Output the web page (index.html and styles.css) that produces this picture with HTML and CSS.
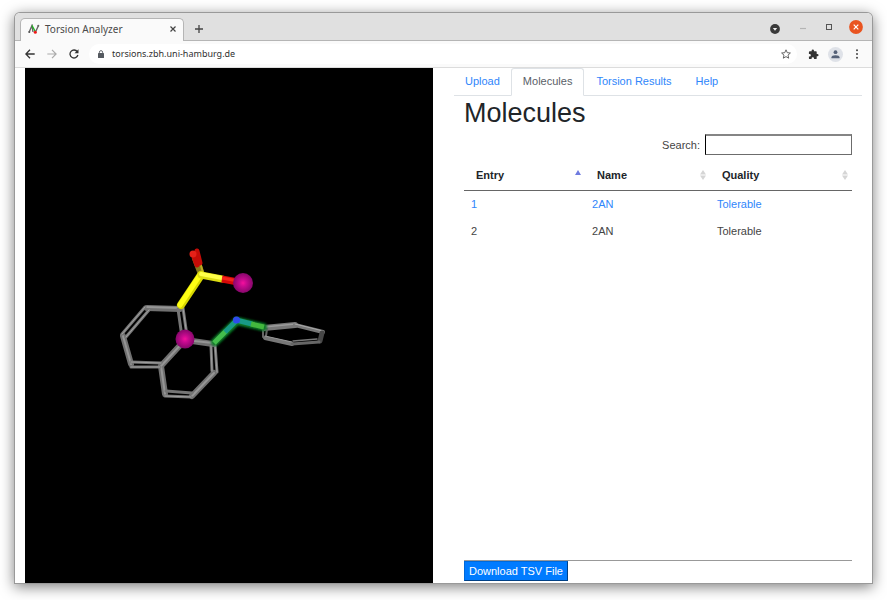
FILE: index.html
```html
<!DOCTYPE html>
<html lang="en">
<head>
<meta charset="utf-8">
<title>Torsion Analyzer</title>
<link rel="stylesheet" href="styles.css">
</head>
<body>
<div class="window">
  <header class="tabstrip">
    <div class="browser-tab">
      <svg class="favicon" width="12" height="10" viewBox="0 0 12 10" fill="none" stroke-width="1.4">
        <path d="M1 8.500 L4 1.500 L5 8" stroke="#666"/><path d="M4 1.500 L7.500 8" stroke="#1fb51f"/><path d="M7.500 8 L10.500 1.500" stroke="#666"/>
        <circle cx="1.300" cy="8" r="1" fill="#555"/><circle cx="10.300" cy="1.800" r="1" fill="#666"/><circle cx="7.300" cy="8.300" r="1.500" fill="#f01818"/>
      </svg>
      <span class="tab-title">Torsion Analyzer</span>
      <button class="icon-btn" aria-label="Close tab"><svg width="8" height="8" viewBox="0 0 8 8" stroke="#444" stroke-width="1.200"><path d="M1.500 1.500 L6.500 6.500 M6.500 1.500 L1.500 6.500"/></svg></button>
    </div>
    <button class="icon-btn new-tab" aria-label="New tab"><svg width="10" height="10" viewBox="0 0 10 10" stroke="#444" stroke-width="1.300"><path d="M5 1 V9 M1 5 H9"/></svg></button>
    <div class="window-controls">
      <button class="icon-btn" aria-label="Tab search"><svg width="10" height="10" viewBox="0 0 10 10"><circle cx="5" cy="5" r="4.900" fill="#3a3a3a"/><path d="M2.800 4 H7.200 L5 6.700 Z" fill="#eee"/></svg></button>
      <button class="icon-btn" aria-label="Minimize"><svg width="6" height="8" viewBox="0 0 6 8"><path d="M0 5.500 H6" stroke="#b4b4b4" stroke-width="1.200"/></svg></button>
      <button class="icon-btn" aria-label="Maximize"><svg width="6" height="6" viewBox="0 0 6 6"><rect x=".5" y=".5" width="5" height="5" fill="none" stroke="#555"/></svg></button>
      <button class="icon-btn" aria-label="Close"><svg width="14" height="14" viewBox="0 0 14 14"><circle cx="7" cy="7" r="6.900" fill="#e95420"/><path d="M4.700 4.700 L9.300 9.300 M9.300 4.700 L4.700 9.300" stroke="#fff" stroke-width="1.200"/></svg></button>
    </div>
  </header>
  <div class="toolbar">
    <div class="nav-buttons">
      <button class="icon-btn" aria-label="Back"><svg width="10" height="10" viewBox="0 0 10 10" fill="none" stroke="#333" stroke-width="1.300"><path d="M9.700 5 H1 M5 .8 L.9 5 L5 9.200"/></svg></button>
      <button class="icon-btn" aria-label="Forward"><svg width="10" height="10" viewBox="0 0 10 10" fill="none" stroke="#aaa" stroke-width="1.200"><path d="M.3 5 H9 M5 .8 L9.100 5 L5 9.200"/></svg></button>
      <button class="icon-btn" aria-label="Reload"><svg width="10" height="10" viewBox="0 0 10 10"><path d="M8.300 2.700 A4 4 0 1 0 8.900 6" fill="none" stroke="#333" stroke-width="1.300"/><path d="M9.500 .3 V4.300 H5.500 Z" fill="#333"/></svg></button>
    </div>
    <div class="address">
      <svg width="6" height="8" viewBox="0 0 6 8"><rect x="0" y="3" width="6" height="5" rx=".6" fill="#555a60"/><path d="M1.400 3.500 V2.200 A1.600 1.600 0 0 1 4.600 2.200 V3.500" fill="none" stroke="#555a60" stroke-width=".9"/></svg>
      <span class="url">torsions.zbh.uni-hamburg.de</span>
      <button class="icon-btn" aria-label="Bookmark"><svg width="10" height="10" viewBox="0 0 10 10"><path d="M5 .8 L6.250 3.700 L9.400 4 L7 6.100 L7.700 9.200 L5 7.600 L2.300 9.200 L3 6.100 L.6 4 L3.750 3.700 Z" fill="none" stroke="#555" stroke-width=".9"/></svg></button>
    </div>
    <button class="icon-btn" aria-label="Extensions"><svg width="11" height="11" viewBox="0 0 24 24"><path fill="#333" d="M20.500 11H19V7c0-1.100-.9-2-2-2h-4V3.500a2.500 2.500 0 0 0-5 0V5H4a2 2 0 0 0-2 2v3.800h1.500a2.700 2.700 0 0 1 0 5.400H2V20a2 2 0 0 0 2 2h3.800v-1.500a2.700 2.700 0 0 1 5.400 0V22H17a2 2 0 0 0 2-2v-4h1.500a2.500 2.500 0 0 0 0-5z"/></svg></button>
    <button class="icon-btn profile" aria-label="Profile"><svg width="15" height="15" viewBox="0 0 15 15"><circle cx="7.500" cy="7.500" r="7.500" fill="#dfe2e8"/><circle cx="7.500" cy="5.200" r="1.900" fill="#556178"/><path d="M3.500 11.300 V10.200 Q3.500 8.200 7.500 8.200 Q11.500 8.200 11.500 10.200 V11.300 Z" fill="#556178"/></svg></button>
    <button class="icon-btn menu" aria-label="Menu"><svg width="4" height="10" viewBox="0 0 4 10" fill="#444"><circle cx="2" cy="1.300" r="1"/><circle cx="2" cy="5" r="1"/><circle cx="2" cy="8.700" r="1"/></svg></button>
  </div>

  <main class="page">
    <section class="viewer" aria-label="3D structure">
      <svg viewBox="25 68 408 515" stroke-linecap="round">
        <defs>
          <radialGradient id="ball"><stop offset="0" stop-color="#f5109c"/><stop offset=".35" stop-color="#c80a90"/><stop offset="1" stop-color="#85076a"/></radialGradient>
          <filter id="glow" x="-20%" y="-20%" width="140%" height="140%"><feGaussianBlur stdDeviation="1.300"/></filter>
        </defs>
        <g stroke="#707070" stroke-width="6">
          <path d="M147 308 L180 309 M123 336 L131 364 M161 366 L185 340 L213 344 M161 366 L165 394 M214 373 L192 396" fill="none"/>
        </g>
        <g stroke="#959595" stroke-width="2">
          <path d="M147 307 L180 308 M123 336 L131 364 M161 366 L185 340 L213 343 M161 366 L165 394 M214 373 L192 396" fill="none"/>
        </g>
        <g fill="none" stroke="#757575" stroke-width="3">
          <path d="M145 307 L122 334 M149 310 L126 337 M131 362 L161 363 M131 367 L160 367 M178 309 L182 337 M183 308 L187 336 M211 346 L212 371 M215 344 L217 372 M166 391 L192 393 M165 396 L191 397"/>
        </g>
        <g fill="none" stroke="#a0a0a0" stroke-width="1">
          <path d="M145 307 L122 334 M149 310 L126 337 M131 362 L161 363 M131 367 L160 367 M183 308 L187 336 M215 344 L217 372 M165 396 L191 397 M211 346 L212 371"/>
        </g>
        <g fill="none">
          <path d="M264 328 L295 325" stroke="#777" stroke-width="6"/><path d="M264 327 L295 324" stroke="#9a9a9a" stroke-width="1.500"/>
          <path d="M295 325 L323 332" stroke="#777" stroke-width="4"/><path d="M295 324 L323 331" stroke="#aaa" stroke-width="1"/>
          <path d="M322 333 L320 341" stroke="#484848" stroke-width="5"/>
          <path d="M263 329 V337 M267 329 L266 336" stroke="#666" stroke-width="2"/>
          <path d="M265 338 L292 344" stroke="#777" stroke-width="4"/><path d="M265 336 L292 342" stroke="#999" stroke-width="1"/>
          <path d="M292 344 L319 342" stroke="#666" stroke-width="3"/><path d="M293 341 L317 339" stroke="#777" stroke-width="1.300"/>
        </g>
        <path d="M215 342 L237 321 L263 327" fill="none" stroke="#087a28" stroke-width="8" filter="url(#glow)"/>
        <g stroke-width="5" stroke-linecap="butt">
          <path d="M214 343 L226 331" stroke="#43bd4c"/><path d="M225 332 L237 320" stroke="#189a86"/>
          <path d="M236 320 L252 324" stroke="#189a86"/><path d="M251 324 L264 327" stroke="#43b83e"/>
        </g>
        <circle cx="236.500" cy="320" r="3.600" fill="#2e4bec"/>
        <path d="M195 257 L201 273" stroke="#85791d" stroke-width="7" stroke-linecap="butt"/>
        <path d="M199 258 L203 273" stroke="#b9ad20" stroke-width="2"/>
        <path d="M193 254 L197 265 M197 251 L200 263" stroke="#c40c07" stroke-width="5"/>
        <circle cx="193" cy="254" r="3.500" fill="#e52118"/>
        <path d="M201 275 L181 305" stroke="#d6d600" stroke-width="8"/><path d="M200 275 L180 305" stroke="#ffff14" stroke-width="5"/>
        <path d="M201 275 L222 279" stroke="#dddd12" stroke-width="7"/><path d="M201 274 L222 278" stroke="#ffff48" stroke-width="4"/>
        <path d="M222 279 L238 282" stroke="#d40808" stroke-width="7" stroke-linecap="butt"/><path d="M222 278 L238 281" stroke="#f4251b" stroke-width="3" stroke-linecap="butt"/>
        <circle cx="243" cy="283" r="10" fill="url(#ball)"/><circle cx="185" cy="339" r="9.500" fill="url(#ball)"/>
      </svg>
    </section>

    <section class="panel">
      <nav class="nav-tabs">
        <a href="#upload">Upload</a>
        <a href="#molecules" class="active">Molecules</a>
        <a href="#results">Torsion Results</a>
        <a href="#help">Help</a>
      </nav>
      <div class="tab-content">
        <h1>Molecules</h1>
        <div class="filter"><label for="search">Search:</label><input id="search" type="search"></div>
        <div class="table-body">
          <table>
            <colgroup><col class="col-entry"><col class="col-name"><col class="col-quality"></colgroup>
            <thead><tr>
              <th><div class="head">Entry<svg width="6" height="10" viewBox="0 0 6 10"><path d="M0 5 L3 0 L6 5 Z" fill="#6f7be0"/></svg></div></th>
              <th><div class="head">Name<svg width="6" height="10" viewBox="0 0 6 10" fill="#d5d5d5"><path d="M0 4.500 L3 0 L6 4.500 Z M0 5.500 L3 10 L6 5.500 Z"/></svg></div></th>
              <th><div class="head">Quality<svg width="6" height="10" viewBox="0 0 6 10" fill="#d5d5d5"><path d="M0 4.500 L3 0 L6 4.500 Z M0 5.500 L3 10 L6 5.500 Z"/></svg></div></th>
            </tr></thead>
            <tbody>
              <tr class="selected"><td>1</td><td>2AN</td><td>Tolerable</td></tr>
              <tr><td>2</td><td>2AN</td><td>Tolerable</td></tr>
            </tbody>
          </table>
        </div>
        <button class="download">Download TSV File</button>
      </div>
    </section>
  </main>
</div>
</body>
</html>
```
FILE: styles.css
```css
* { box-sizing: border-box; }

body {
  margin: 0;
  height: 100vh;
  padding: 13px 15px 17px;
  background: #fff;
  font: 11px/16px "Liberation Sans", Arial, sans-serif;
  color: #212529;
  overflow: hidden;
}

.window {
  display: flex;
  flex-direction: column;
  height: 100%;
  background: #fff;
  border-radius: 5px 5px 0 0;
  box-shadow: 0 0 0 1px #999, 0 3px 14px 1px rgba(0, 0, 0, .5);
}

.icon-btn {
  display: flex;
  padding: 0;
  border: 0;
  background: none;
}

/* Browser frame */
.tabstrip {
  display: flex;
  flex: none;
  align-items: center;
  height: 28px;
  padding: 0 9px 0 5px;
  background: #e0e0e0;
  border-radius: 5px 5px 0 0;
  border-bottom: 1px solid #b5b5b5;
}

.browser-tab {
  display: flex;
  align-items: center;
  align-self: flex-end;
  gap: 5px;
  width: 164px;
  height: 23px;
  margin-bottom: -1px;
  padding: 0 6px 2px 7px;
  background: #fafafa;
  border: 1px solid #b5b5b5;
  border-bottom: 0;
  border-radius: 5px 5px 0 0;
}

.tab-title {
  flex: 1;
  font: 10px/16px "Noto Sans", sans-serif;
  color: #4a4a4a;
}

.new-tab { margin: 4px 0 0 10px; }

.window-controls {
  display: flex;
  align-items: center;
  gap: 20px;
  margin-left: auto;
}

.window-controls .icon-btn:first-child { margin-top: 4px; }
.window-controls .icon-btn:last-child { margin-left: -3px; }

.toolbar {
  display: flex;
  flex: none;
  align-items: center;
  height: 27px;
  padding: 0 13px 0 10px;
  background: #fafafa;
  border-bottom: 1px solid #dcdcdc;
}

.nav-buttons {
  display: flex;
  gap: 12px;
}

.address {
  display: flex;
  flex: 1;
  align-items: center;
  gap: 8px;
  height: 20px;
  margin: 0 11px 0 10px;
  padding: 0 6px 0 9px;
  background: #fff;
  border-radius: 10px;
}

.url {
  flex: 1;
  font: 9px/16px "Noto Sans", sans-serif;
  color: #303030;
}

.profile { margin-left: 9px; }
.menu { margin-left: 12px; }

/* Page */
.page {
  display: flex;
  flex: 1;
  gap: 21px;
  min-height: 0;
  padding: 0 10px;
}

.viewer,
.panel {
  flex: 1 1 0;
  min-width: 0;
}

.viewer {
  background: #000;
}

.viewer svg {
  display: block;
  width: 100%;
  height: 100%;
}

.panel {
  display: flex;
  flex-direction: column;
}

.nav-tabs {
  display: flex;
  flex: none;
  height: 28px;
  border-bottom: 1px solid #dee2e6;
}

.nav-tabs a {
  height: 28px;
  padding: 4px 10px;
  border: 1px solid transparent;
  border-radius: 3px 3px 0 0;
  color: #2f86fb;
  text-decoration: none;
}

.nav-tabs a:nth-child(n+2) { padding: 4px 11px; }

.nav-tabs .active {
  background: #fff;
  border-color: #dee2e6 #dee2e6 #fff;
  color: #5a6067;
}

.tab-content {
  display: flex;
  flex: 1;
  flex-direction: column;
  min-height: 0;
  padding: 0 10px 2px;
}

h1 {
  margin: 0 0 4px;
  font-size: 27px;
  font-weight: 400;
  line-height: 34px;
}

.filter {
  display: flex;
  align-items: center;
  justify-content: flex-end;
  gap: 5px;
  color: #444;
}

.filter input {
  width: 147px;
  height: 21px;
  border: 1px solid #6c6c6c;
  border-left-color: #000;
  border-top-width: 2px;
  border-top-color: #858585;
  font: inherit;
  background: #fff;
}

.table-body {
  flex: 1;
  margin-top: 5px;
  overflow: auto;
  border-bottom: 1px solid #999;
}

table {
  width: 100%;
  table-layout: fixed;
  border-collapse: separate;
  border-spacing: 0;
}

.col-entry { width: 31.2%; }
.col-name { width: 32.2%; }
.col-quality { width: 36.6%; }

th {
  height: 31px;
  padding: 0 4px 0 12px;
  border-bottom: 1px solid #666;
  text-align: left;
}

.head {
  display: flex;
  align-items: center;
  justify-content: space-between;
}

td {
  height: 27px;
  padding: 0 7px 2px;
  color: #444;
}

.selected td { color: #2f86fb; }

.download {
  align-self: flex-start;
  height: 20px;
  padding: 0 4px;
  border: 1px outset #0069d9;
  background: #007bff;
  color: #fff;
  font: inherit;
}
```
